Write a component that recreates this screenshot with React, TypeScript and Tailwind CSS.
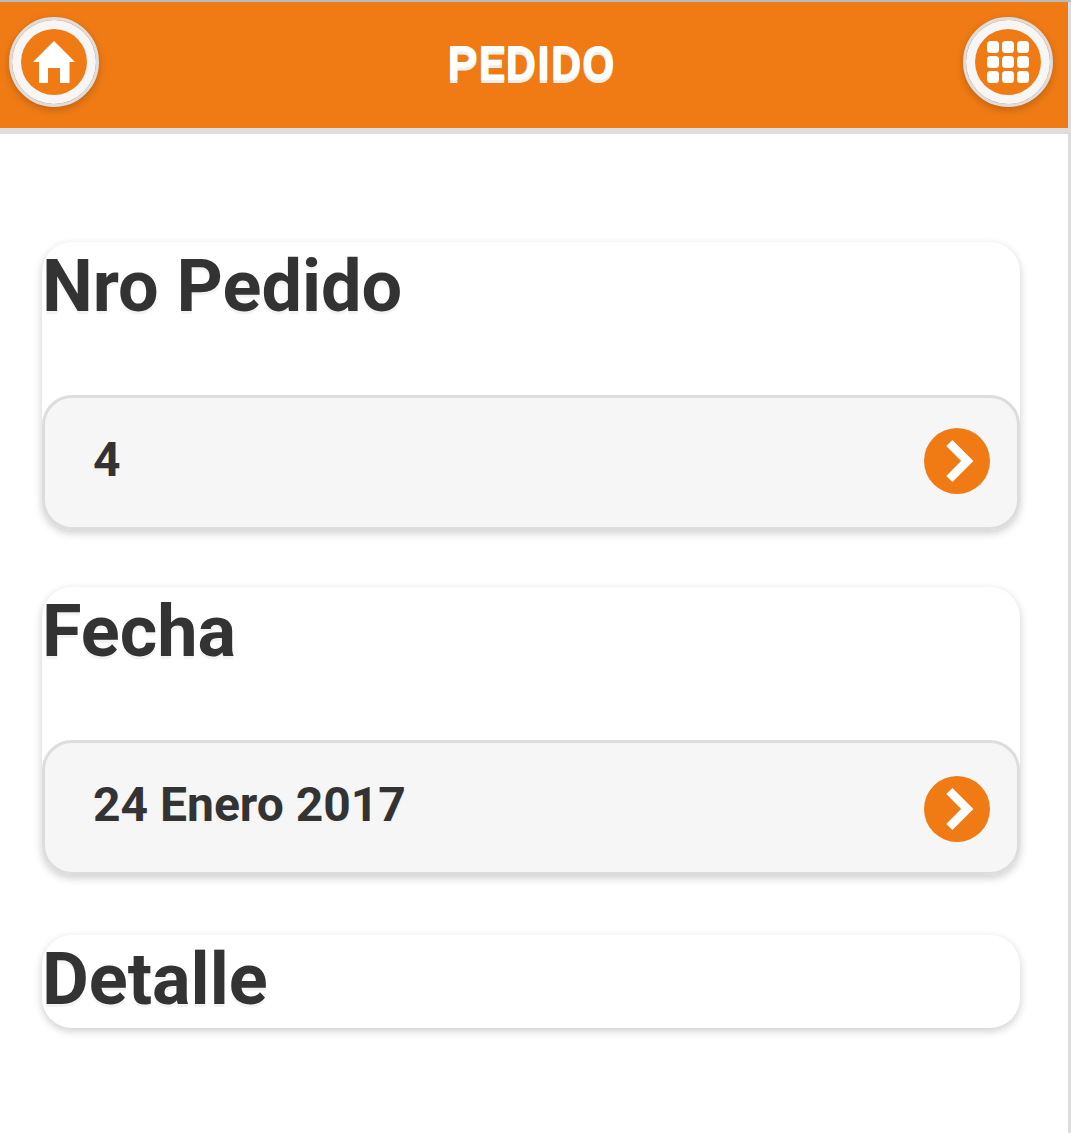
import type { ReactNode } from "react";

function RoundButton({ label, children }: { label: string; children: ReactNode }) {
  return (
    <button
      aria-label={label}
      className="flex size-[90px] items-center justify-center rounded-full border-[3px] border-[#ddd] bg-[#f6f6f6] bg-clip-padding p-0 shadow-[0_3px_9px_rgba(0,0,0,0.2)]"
    >
      <svg viewBox="0 0 66 66" className="size-[66px]">
        <circle cx="33" cy="33" r="33" fill="#f07b14" />
        {children}
      </svg>
    </button>
  );
}

function Card({ title, value, arrow = "" }: { title: string; value?: string; arrow?: string }) {
  return (
    <section className="rounded-[30px] bg-white shadow-[0_3px_9px_rgba(0,0,0,0.2)]">
      <h2
        className={
          "text-[72px] leading-[89px] font-bold text-[#333] [text-shadow:0_3px_0_#f3f3f3] " +
          (value ? "mb-[60px] h-[93px]" : "h-[93px]")
        }
      >
        {title}
      </h2>
      {value && (
        <a className="flex h-[135px] items-start justify-between rounded-[30px] border-[3px] border-[#ddd] bg-[#f6f6f6] pr-[27px] pl-12">
          <span className="mt-[31px] text-[48px] leading-[62px] font-bold text-[#333] [text-shadow:0_3px_0_#f3f3f3]">
            {value}
          </span>
          <svg viewBox="0 0 66 66" className={"size-[66px] shrink-0 " + arrow}>
            <circle cx="33" cy="33" r="33" fill="#f07b14" />
            <polygon points="28.4,12 22.3,18.1 37.1,33 22.3,47.9 28.4,54 49.4,33" fill="#fff" />
          </svg>
        </a>
      )}
    </section>
  );
}

const cells = [12, 27, 42];

export default function App() {
  return (
    <div className="h-[1133px] w-[1071px] overflow-hidden border-t-2 border-t-[#bbb] bg-white font-[Roboto,sans-serif]">
      <div className="h-full border-r-[3px] border-[#ddd]">
        <header className="flex h-[132px] items-start justify-between border-b-[6px] border-[#ddd] bg-[#f07b14] pt-[15px] pr-[15px] pl-[9px]">
          <RoundButton label="Inicio">
            <polygon points="33,12 12,33 18,33 18,54 27,54 27,39 39,39 39,54 48.5,54 48.5,33 54,33" fill="#fff" />
          </RoundButton>
          <h1 className="mt-4 text-[48px] leading-[62px] font-bold text-white [text-shadow:0_3px_0_#eee]">
            PEDIDO
          </h1>
          <RoundButton label="Menú">
            {cells.map((y) =>
              cells.map((x) => <rect key={`${x}-${y}`} x={x} y={y} width="12" height="12" rx="3.5" fill="#fff" />)
            )}
          </RoundButton>
        </header>
        <main className="flex flex-col pt-[108px] pr-12 pl-[42px]">
          <Card title="Nro Pedido" value="4" arrow="mt-[30px]" />
          <div className="h-[57px]" />
          <Card title="Fecha" value="24 Enero 2017" arrow="mt-[33px]" />
          <div className="h-[60px]" />
          <Card title="Detalle" />
        </main>
      </div>
    </div>
  );
}
